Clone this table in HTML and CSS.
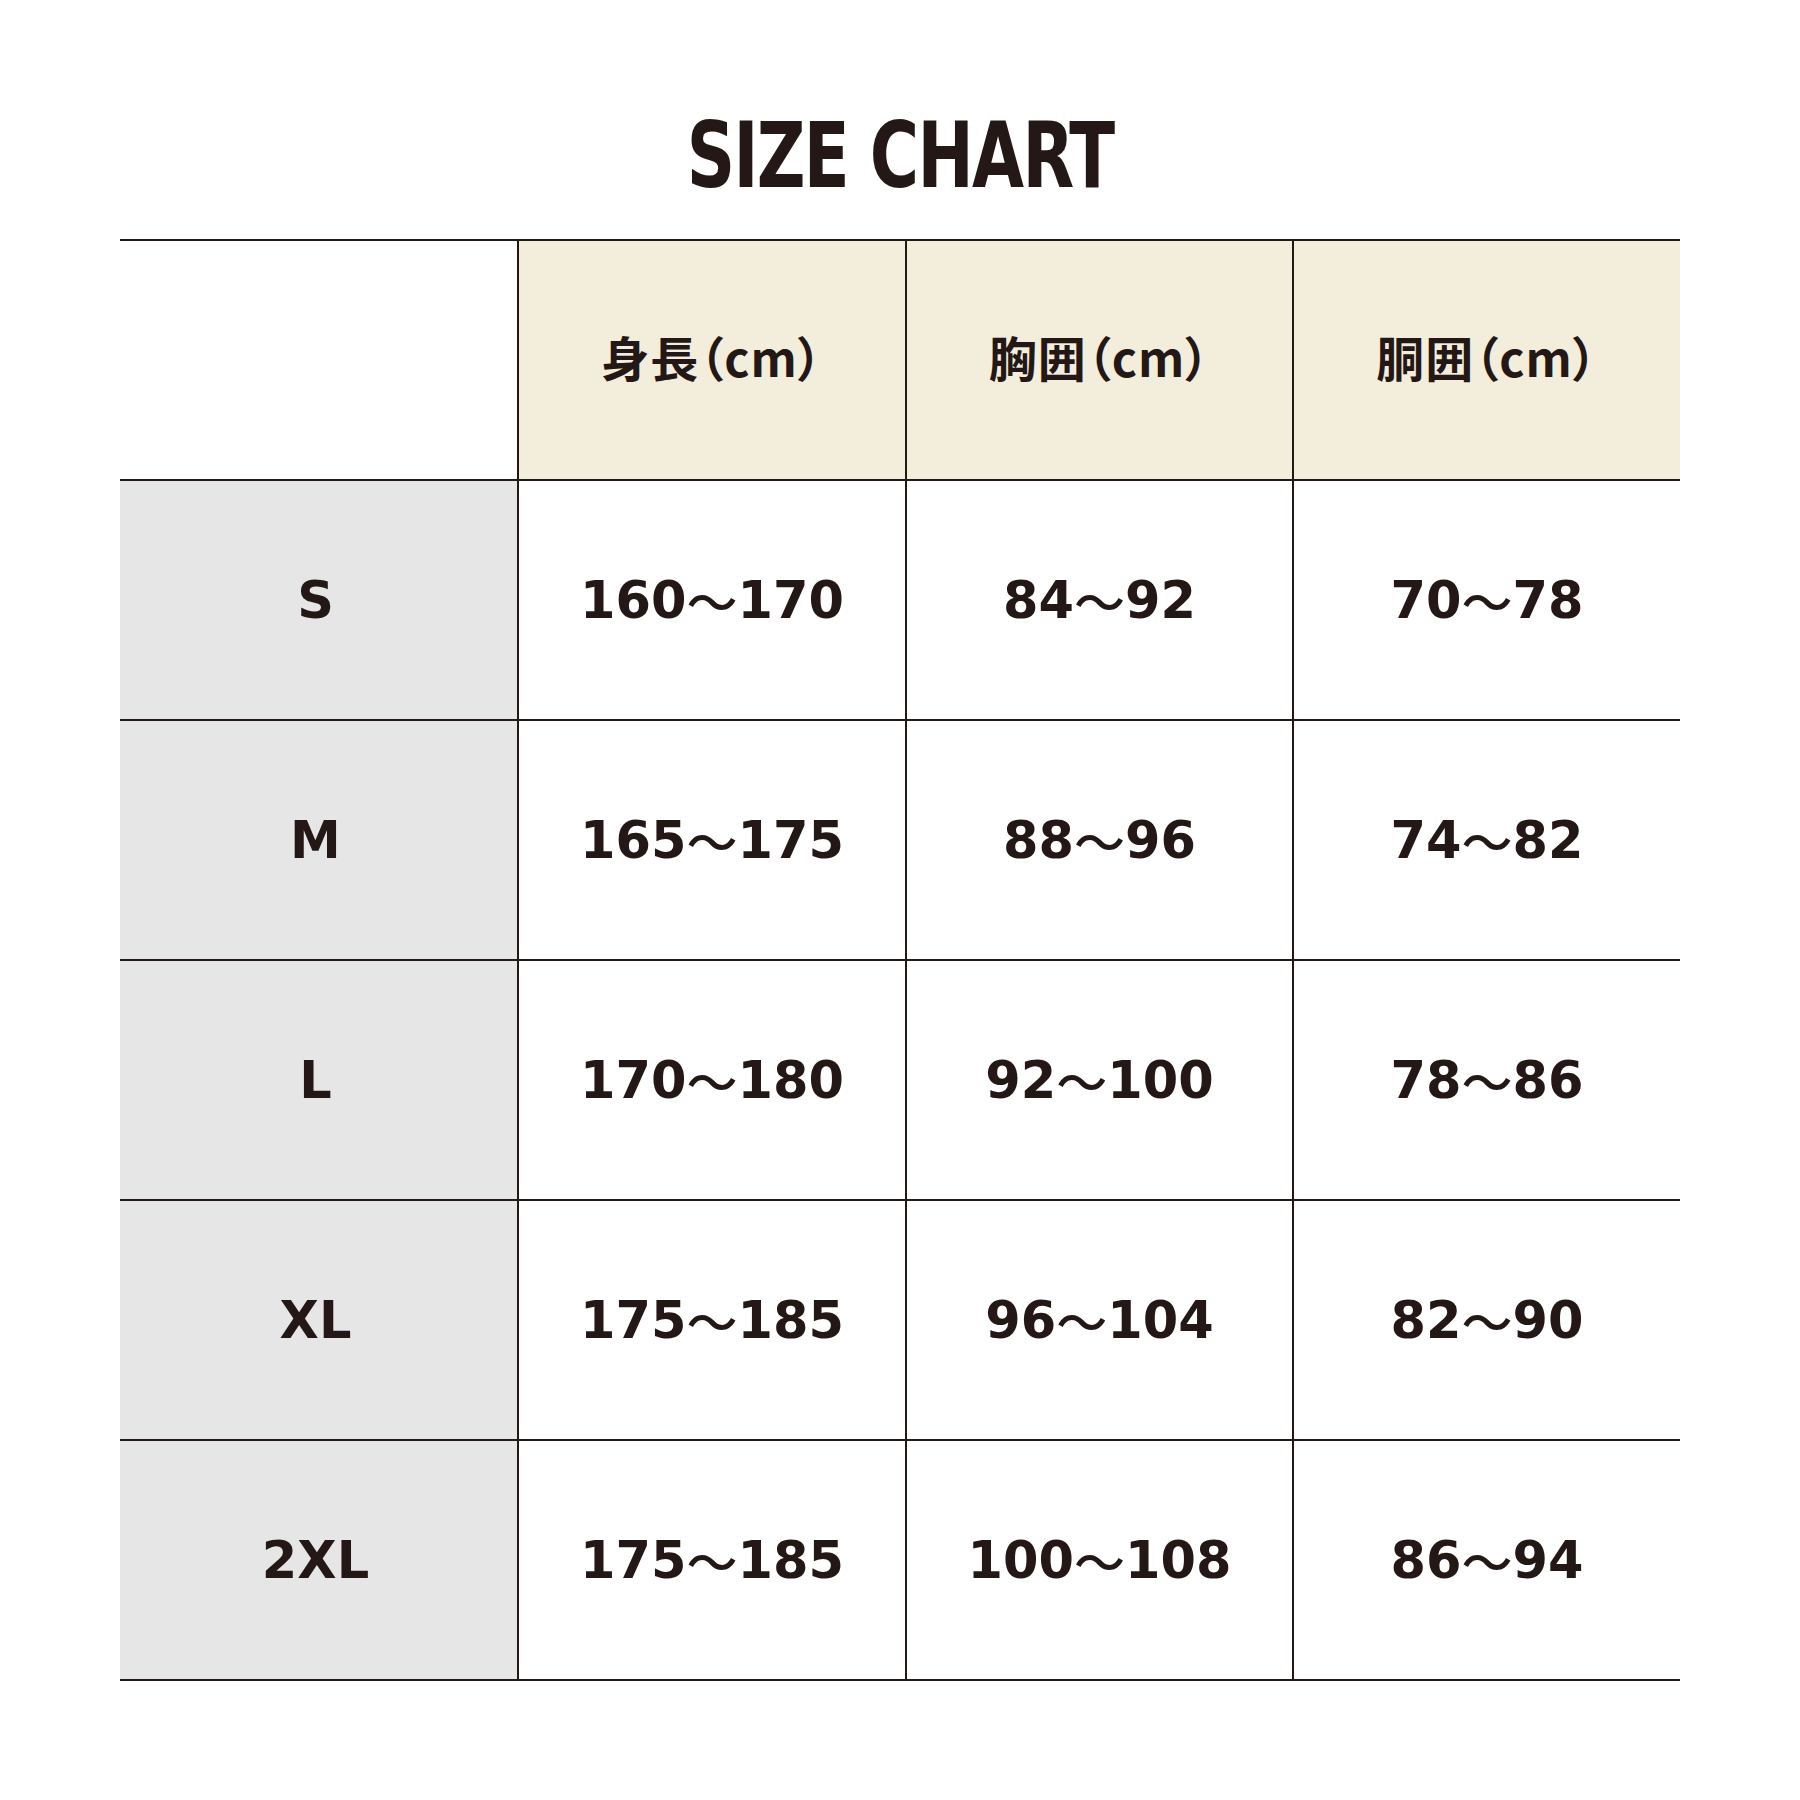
FILE: index.html
```html
<!DOCTYPE html>
<html lang="ja">
<head>
<meta charset="utf-8">
<title>SIZE CHART</title>
<link rel="stylesheet" href="styles.css">
</head>
<body>
<div class="page">
  <h1 class="title"><span class="title-text">SIZE CHART</span></h1>
  <div class="chart">
    <div class="cell corner"></div>
    <div class="cell head">身長（cm）</div>
    <div class="cell head">胸囲（cm）</div>
    <div class="cell head">胴囲（cm）</div>

    <div class="cell size">S</div>
    <div class="cell val">160<span class="tilde">～</span>170</div>
    <div class="cell val">84<span class="tilde">～</span>92</div>
    <div class="cell val">70<span class="tilde">～</span>78</div>

    <div class="cell size">M</div>
    <div class="cell val">165<span class="tilde">～</span>175</div>
    <div class="cell val">88<span class="tilde">～</span>96</div>
    <div class="cell val">74<span class="tilde">～</span>82</div>

    <div class="cell size">L</div>
    <div class="cell val">170<span class="tilde">～</span>180</div>
    <div class="cell val">92<span class="tilde">～</span>100</div>
    <div class="cell val">78<span class="tilde">～</span>86</div>

    <div class="cell size">XL</div>
    <div class="cell val">175<span class="tilde">～</span>185</div>
    <div class="cell val">96<span class="tilde">～</span>104</div>
    <div class="cell val">82<span class="tilde">～</span>90</div>

    <div class="cell size">2XL</div>
    <div class="cell val">175<span class="tilde">～</span>185</div>
    <div class="cell val">100<span class="tilde">～</span>108</div>
    <div class="cell val">86<span class="tilde">～</span>94</div>
  </div>
</div>
</body>
</html>
```
FILE: styles.css
```css
html, body {
  margin: 0;
  padding: 0;
  background: #ffffff;
}
.page {
  width: 1800px;
  height: 1800px;
  color: #231815;
  font-family: "DejaVu Sans", "Noto Sans CJK JP", sans-serif;
}
.title {
  margin: 0;
  box-sizing: border-box;
  height: 239px;
  padding-top: 111px;
  text-align: center;
  font-family: "Liberation Sans Narrow", "DejaVu Sans Condensed", sans-serif;
  font-weight: 700;
  font-size: 90px;
  line-height: 90px;
  letter-spacing: -2px;
}
.title-text {
  display: inline-block;
  transform: scaleX(0.83);
}
.chart {
  margin-left: 120px;
  width: 1560px;
  display: grid;
  grid-template-columns: 397px 388px 387px 388px;
  grid-auto-rows: 240px;
  border-top: 2px solid #231815;
}
.cell {
  box-sizing: border-box;
  display: flex;
  align-items: center;
  justify-content: center;
  border-bottom: 2px solid #231815;
  border-left: 2px solid #231815;
  line-height: 1;
}
.corner, .size {
  border-left: none;
}
.head {
  background: #f3eddc;
  font-family: "Noto Sans CJK JP", sans-serif;
  font-feature-settings: "palt";
  font-weight: 700;
  font-size: 48px;
  letter-spacing: 1px;
  padding-bottom: 8px;
}
.size {
  background: #e6e6e7;
  font-weight: 700;
  font-size: 51px;
  padding-right: 6px;
}
.val {
  font-weight: 700;
  font-size: 51px;
}
.tilde {
  font-family: "Noto Sans CJK JP", sans-serif;
  font-weight: 500;
}
```
